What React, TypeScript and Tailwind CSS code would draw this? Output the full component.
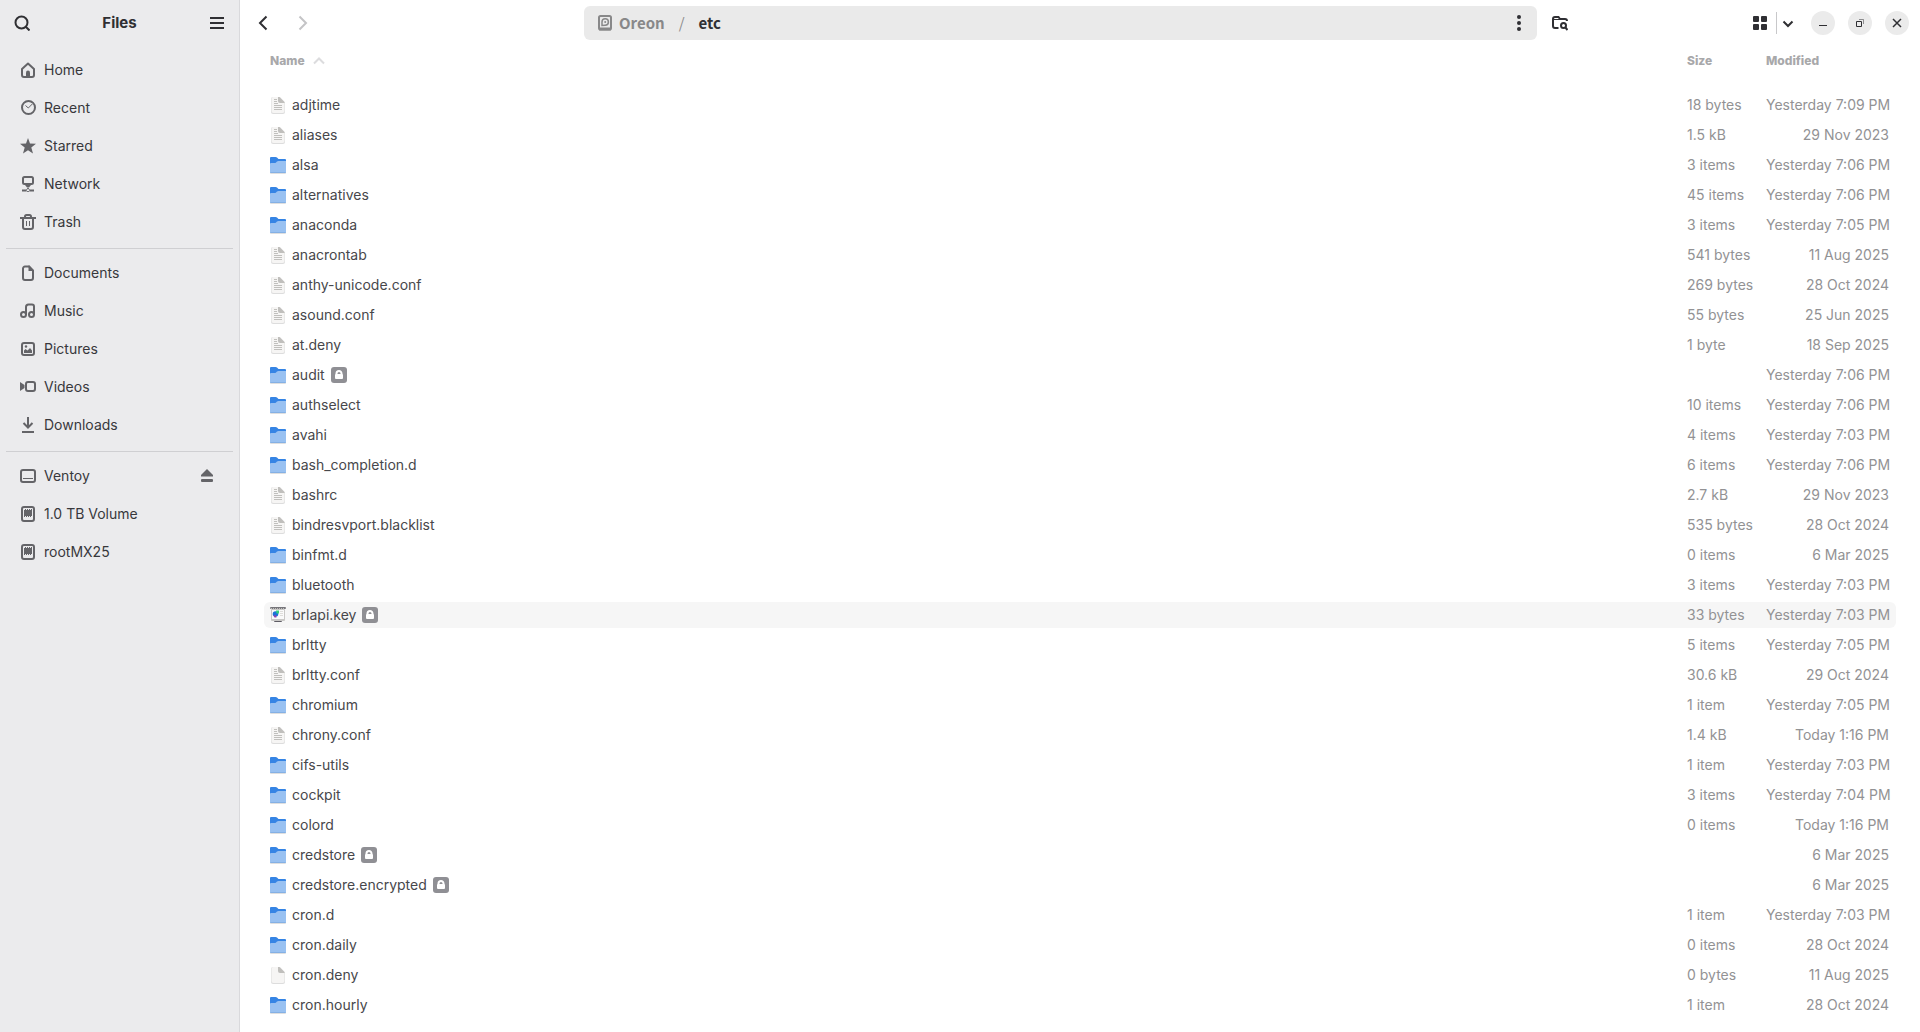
import type { ReactNode } from "react";
import clsx from "clsx";

type Kind = "text" | "folder" | "key" | "empty";

interface FileEntry {
  name: string;
  kind: Kind;
  size: string;
  modified: string;
  locked?: boolean;
  hovered?: boolean;
}

const files: FileEntry[] = [
  { name: "adjtime", kind: "text", size: "18 bytes", modified: "Yesterday 7:09 PM" },
  { name: "aliases", kind: "text", size: "1.5 kB", modified: "29 Nov 2023" },
  { name: "alsa", kind: "folder", size: "3 items", modified: "Yesterday 7:06 PM" },
  { name: "alternatives", kind: "folder", size: "45 items", modified: "Yesterday 7:06 PM" },
  { name: "anaconda", kind: "folder", size: "3 items", modified: "Yesterday 7:05 PM" },
  { name: "anacrontab", kind: "text", size: "541 bytes", modified: "11 Aug 2025" },
  { name: "anthy-unicode.conf", kind: "text", size: "269 bytes", modified: "28 Oct 2024" },
  { name: "asound.conf", kind: "text", size: "55 bytes", modified: "25 Jun 2025" },
  { name: "at.deny", kind: "text", size: "1 byte", modified: "18 Sep 2025" },
  { name: "audit", kind: "folder", size: "", modified: "Yesterday 7:06 PM", locked: true },
  { name: "authselect", kind: "folder", size: "10 items", modified: "Yesterday 7:06 PM" },
  { name: "avahi", kind: "folder", size: "4 items", modified: "Yesterday 7:03 PM" },
  { name: "bash_completion.d", kind: "folder", size: "6 items", modified: "Yesterday 7:06 PM" },
  { name: "bashrc", kind: "text", size: "2.7 kB", modified: "29 Nov 2023" },
  { name: "bindresvport.blacklist", kind: "text", size: "535 bytes", modified: "28 Oct 2024" },
  { name: "binfmt.d", kind: "folder", size: "0 items", modified: "6 Mar 2025" },
  { name: "bluetooth", kind: "folder", size: "3 items", modified: "Yesterday 7:03 PM" },
  { name: "brlapi.key", kind: "key", size: "33 bytes", modified: "Yesterday 7:03 PM", locked: true, hovered: true },
  { name: "brltty", kind: "folder", size: "5 items", modified: "Yesterday 7:05 PM" },
  { name: "brltty.conf", kind: "text", size: "30.6 kB", modified: "29 Oct 2024" },
  { name: "chromium", kind: "folder", size: "1 item", modified: "Yesterday 7:05 PM" },
  { name: "chrony.conf", kind: "text", size: "1.4 kB", modified: "Today 1:16 PM" },
  { name: "cifs-utils", kind: "folder", size: "1 item", modified: "Yesterday 7:03 PM" },
  { name: "cockpit", kind: "folder", size: "3 items", modified: "Yesterday 7:04 PM" },
  { name: "colord", kind: "folder", size: "0 items", modified: "Today 1:16 PM" },
  { name: "credstore", kind: "folder", size: "", modified: "6 Mar 2025", locked: true },
  { name: "credstore.encrypted", kind: "folder", size: "", modified: "6 Mar 2025", locked: true },
  { name: "cron.d", kind: "folder", size: "1 item", modified: "Yesterday 7:03 PM" },
  { name: "cron.daily", kind: "folder", size: "0 items", modified: "28 Oct 2024" },
  { name: "cron.deny", kind: "empty", size: "0 bytes", modified: "11 Aug 2025" },
  { name: "cron.hourly", kind: "folder", size: "1 item", modified: "28 Oct 2024" },
];

// 16px symbolic icon, strokes and fills follow the text colour
const Icon = ({ children }: { children: ReactNode }) => (
  <svg
    className="size-4 shrink-0"
    viewBox="0 0 16 16"
    fill="none"
    stroke="currentColor"
    strokeWidth="2"
    aria-hidden="true"
  >
    {children}
  </svg>
);

const VolumeIcon = () => (
  <Icon>
    <rect x="2" y="1" width="12" height="14" rx="2" />
    <path
      d="M4 4h1V3h1v1h1V3h1v1h1V3h1v1h1V3h1v7h-1v1h-1v-1h-1v1h-1v-1h-1v1h-1v-1h-1v1h-1v-1H4z"
      fill="currentColor"
      stroke="none"
    />
  </Icon>
);

const places = [
  {
    label: "Home",
    icon: (
      <Icon>
        <path d="M2 7 8 1.500 14 7v6a2 2 0 0 1-2 2H4a2 2 0 0 1-2-2z" strokeLinejoin="round" />
        <path d="M6 15v-4.500a2 2 0 0 1 4 0V15z" fill="currentColor" stroke="none" />
      </Icon>
    ),
  },
  {
    label: "Recent",
    icon: (
      <Icon>
        <circle cx="8.500" cy="7.500" r="6.500" />
        <path d="m5.500 5.500 2.800 2.500 4-4" strokeWidth="1" />
      </Icon>
    ),
  },
  {
    label: "Starred",
    icon: (
      <Icon>
        <path
          d="M8 0 10 5.500l6 .2-4.700 3.800 1.700 6L8 12.200 3 15.500l1.700-6L0 5.700l6-.2z"
          fill="currentColor"
          stroke="none"
        />
      </Icon>
    ),
  },
  {
    label: "Network",
    icon: (
      <Icon>
        <rect x="3" y="1" width="10" height="7" rx="1.500" />
        <path d="M5 9h6l-2 2.500H7z" fill="currentColor" stroke="none" />
        <path d="M2 14.500h4M10 14.500h4" />
        <path d="m8 12 2 2.500L8 16l-2-1.500z" strokeWidth="1" />
      </Icon>
    ),
  },
  {
    label: "Trash",
    icon: (
      <Icon>
        <path d="M5 4V2.500A1.500 1.500 0 0 1 6.500 1h3A1.500 1.500 0 0 1 11 2.500V4M0 4h16" />
        <path d="M3 5v8a2 2 0 0 0 2 2h6a2 2 0 0 0 2-2V5" />
        <path d="M6.500 7v5M9.500 7v5" strokeWidth="1" />
      </Icon>
    ),
  },
];

const userFolders = [
  {
    label: "Documents",
    icon: (
      <Icon>
        <path d="M9 1.500H5a2 2 0 0 0-2 2V13a2 2 0 0 0 2 2h6a2 2 0 0 0 2-2V5.500z" />
        <path d="M8.500.5V6H14L9.500.5z" fill="currentColor" stroke="none" />
      </Icon>
    ),
  },
  {
    label: "Music",
    icon: (
      <Icon>
        <circle cx="3.500" cy="11.500" r="2.500" />
        <circle cx="11.500" cy="11.500" r="2.500" />
        <path d="M6 12V4a2.500 2.500 0 0 1 2.500-2.500H12a2 2 0 0 1 2 2V12" />
      </Icon>
    ),
  },
  {
    label: "Pictures",
    icon: (
      <Icon>
        <rect x="2" y="2" width="12" height="12" rx="2" />
        <path d="M4 12V9.500L5.500 8l2 1.500L10 7l2 2.500V12z" fill="currentColor" stroke="none" />
        <circle cx="6" cy="5.500" r="1.200" fill="currentColor" stroke="none" />
      </Icon>
    ),
  },
  {
    label: "Videos",
    icon: (
      <Icon>
        <rect x="6" y="3" width="9" height="9" rx="2" />
        <path d="M0 3v9l4.500-3v-3z" fill="currentColor" stroke="none" />
      </Icon>
    ),
  },
  {
    label: "Downloads",
    icon: (
      <Icon>
        <path d="M8 0v10M3.500 6 8 10.500 12.500 6M2 15h12" />
      </Icon>
    ),
  },
];

const drives = [
  {
    label: "Ventoy",
    ejectable: true,
    icon: (
      <Icon>
        <rect x="1" y="2" width="14" height="12" rx="2" />
        <path d="M3 10.500h10" strokeWidth="1" />
      </Icon>
    ),
  },
  { label: "1.0 TB Volume", icon: <VolumeIcon /> },
  { label: "rootMX25", icon: <VolumeIcon /> },
];

const FileIcon = ({ kind }: { kind: Kind }) => {
  if (kind === "folder") {
    return (
      <svg className="size-[18px] shrink-0" viewBox="0 0 18 18" aria-hidden="true">
        <path d="M1 16.500h16V17q0 1-1 1H2q-1 0-1-1z" fill="#00000020" />
        <path d="M1 2q0-1 1-1h4.500Q7.500 1 8 1.500L9.500 3H16q1 0 1 1v10H1z" fill="#3584e4" />
        <path d="M1 16V8q0-1 1-1h3.500Q6.500 7 7 6.500L8 5.500Q8.500 5 9.500 5H17v11q0 1-1 1H2q-1 0-1-1z" fill="#99c1f1" />
        <path d="M1 16h16q0 1-1 1H2q-1 0-1-1z" fill="#84b0e4" />
      </svg>
    );
  }
  if (kind === "key") {
    return (
      <svg className="size-[18px] shrink-0" viewBox="0 0 18 18" aria-hidden="true">
        <path d="M6 14h6l1 2H5z" fill="#5e5c64" />
        <rect x="2" y="3" width="14" height="12" rx="1" fill="#c9c8c6" />
        <rect x="3" y="4" width="12" height="9" fill="#fafafa" />
        <rect x="1" y="1" width="16" height="2" rx="1" fill="#77767b" />
        <path d="M2 2.500h14" stroke="#c0bfbc" strokeDasharray="1 1" />
        <circle cx="6.500" cy="8" r="2.800" fill="#1c71d8" />
        <path d="M7 4.500h3v3H7.500z" fill="#33d17a" />
        <path d="M4.500 9.500 7 9l.5 2.500h-2z" fill="#9141ac" />
        <path d="M11 5.500h3M11 7.500h3M11 9.500h3" stroke="#deddda" />
      </svg>
    );
  }
  return (
    <svg className="size-[18px] shrink-0" viewBox="0 0 18 18" aria-hidden="true">
      <rect x="2" y="1" width="14" height="17" rx="2" fill="#00000022" />
      <path d="M4.500 1H10l5.500 5.500V15q0 2-2 2h-9q-2 0-2-2V3q0-2 2-2z" fill="#f6f5f4" />
      <path d="M10 0h6v6h-.5z" fill="#fff" />
      <path d="M9 1h1.500l5 5V7H11Q9 7 9 5z" fill="#c0bfbc" />
      {kind === "text" && (
        <path d="M5 3.500h3M5 5.500h3M5 7.500h4M5 9.500h8M5 11.500h8M5 13.500h8" stroke="#c0bfbc" />
      )}
    </svg>
  );
};

const LockBadge = () => (
  <svg className="size-4 shrink-0" viewBox="0 0 16 16" role="img" aria-label="Locked">
    <rect width="16" height="16" rx="3" fill="#8f8f94" />
    <path d="M5.500 7.500v-1a2.500 2.500 0 0 1 5 0v1" fill="none" stroke="#fff" strokeWidth="2" />
    <rect x="4" y="7" width="8" height="5" rx="1" fill="#fff" />
  </svg>
);

interface Place {
  label: string;
  icon: ReactNode;
  ejectable?: boolean;
}

const PlaceList = ({ items }: { items: Place[] }) => (
  <ul>
    {items.map((item) => (
      <li key={item.label} className="flex h-[38px] items-center">
        <a href="#" className="flex flex-1 items-center gap-2 pl-3.5 text-[#38383c]">
          <span className="text-[#646468]">{item.icon}</span>
          {item.label}
        </a>
        {item.ejectable && (
          <button type="button" aria-label="Eject" className="mr-[18px] text-[#646468]">
            <Icon>
              <path d="M8 1 2 7v1.500h12V7z" fill="currentColor" stroke="none" />
              <rect x="2" y="11" width="12" height="3" rx="1" fill="currentColor" stroke="none" />
            </Icon>
          </button>
        )}
      </li>
    ))}
  </ul>
);

const Sidebar = () => (
  <aside className="w-60 shrink-0 border-r border-[#d9d9dc] bg-[#ebebed]">
    <header className="flex h-[46px] items-center justify-between px-3.5 text-[#2f2f33]">
      <button type="button" aria-label="Search">
        <Icon>
          <circle cx="7.500" cy="7.500" r="6" />
          <path d="m11.500 11.500 4 4" />
        </Icon>
      </button>
      <h1 className="text-[15px] font-bold">Files</h1>
      <button type="button" aria-label="Main menu">
        <Icon>
          <path d="M1 3h14M1 8h14M1 13h14" />
        </Icon>
      </button>
    </header>
    <nav className="px-1.5 pt-[5px]">
      <PlaceList items={places} />
      <hr className="mt-[7px] mb-[5px] border-[#cfcfd2]" />
      <PlaceList items={userFolders} />
      <hr className="mt-[7px] mb-[5px] border-[#cfcfd2]" />
      <PlaceList items={drives} />
    </nav>
  </aside>
);

const WindowButton = ({ label, children }: { label: string; children: ReactNode }) => (
  <button
    type="button"
    aria-label={label}
    className="flex size-6 items-center justify-center rounded-full bg-[#ebebeb]"
  >
    {children}
  </button>
);

const HeaderBar = () => (
  <header className="flex h-[46px] items-center px-1.5 text-[#2f2f33]">
    <div className="flex w-[338px] shrink-0 gap-1.5">
      <button type="button" aria-label="Back" className="flex size-[34px] items-center justify-center">
        <Icon>
          <path d="M11.500 1.500 5 8l6.500 6.500" />
        </Icon>
      </button>
      <button
        type="button"
        aria-label="Forward"
        disabled
        className="flex size-[34px] items-center justify-center text-[#c4c4c6]"
      >
        <Icon>
          <path d="M4.500 1.500 11 8l-6.500 6.500" />
        </Icon>
      </button>
    </div>

    <div className="flex h-[34px] flex-1 items-center rounded-md bg-[#eaeaea] pl-[13px] pr-2.5 font-['Noto_Sans_CJK_JP',sans-serif] text-[15px] leading-5 font-bold">
      <a href="#" className="flex items-center gap-1.5 text-[#888889]">
        <Icon>
          <rect x="2" y="1" width="12" height="13.500" rx="1.500" />
          <path d="M2 14h12" strokeWidth="3" />
          <path d="M5 10.500V7a3.200 3.200 0 1 1 3.200 3.200z" strokeWidth="1.500" />
          <circle cx="8.200" cy="7" r="1" fill="currentColor" stroke="none" />
        </Icon>
        Oreon
      </a>
      <span className="mx-3.5 font-normal text-[#8c8c8d]">/</span>
      <span>etc</span>
      <button type="button" aria-label="Folder menu" className="ml-auto">
        <Icon>
          <g fill="currentColor" stroke="none">
            <circle cx="8" cy="2" r="2" />
            <circle cx="8" cy="8" r="2" />
            <circle cx="8" cy="14" r="2" />
          </g>
        </Icon>
      </button>
    </div>

    <div className="flex w-[377px] shrink-0 items-center pl-1.5">
      <button
        type="button"
        aria-label="Search current folder"
        className="flex size-[34px] items-center justify-center"
      >
        <Icon>
          <path d="M6.500 13H3a2 2 0 0 1-2-2V4a2 2 0 0 1 2-2h3.500l1.500 2h5a2 2 0 0 1 2 2" />
          <path d="M1.500 4.500H9" strokeWidth="1" />
          <circle cx="11.500" cy="10.500" r="2.500" />
          <path d="m13 12 2.500 3" />
        </Icon>
      </button>
      <div className="ml-auto flex items-center">
        <button type="button" aria-label="Grid view" className="px-2">
          <Icon>
            <g fill="currentColor" stroke="none">
              <rect x="1" y="1" width="6" height="6" rx="1" />
              <rect x="9" y="1" width="6" height="6" rx="1" />
              <rect x="1" y="9" width="6" height="6" rx="1" />
              <rect x="9" y="9" width="6" height="6" rx="1" />
            </g>
          </Icon>
        </button>
        <div className="h-[22px] w-px bg-[#c8c8ca]" />
        <button type="button" aria-label="View options" className="pr-[15px] pl-[3px]">
          <Icon>
            <path d="M3.500 6.500 8 11l4.500-4.500" />
          </Icon>
        </button>
        <div className="flex gap-[13px] pr-[5px]">
          <WindowButton label="Minimize">
            <Icon>
              <path d="M4 10.500h8" strokeWidth="1" />
            </Icon>
          </WindowButton>
          <WindowButton label="Restore">
            <Icon>
              <path d="M4.500 6.500h5v5h-5z" strokeWidth="1" />
              <path d="M7 4.500h4.500V9" strokeWidth="1" opacity=".5" />
            </Icon>
          </WindowButton>
          <WindowButton label="Close">
            <Icon>
              <path d="m4 4 8 8M12 4l-8 8" strokeWidth="1.500" />
            </Icon>
          </WindowButton>
        </div>
      </div>
    </div>
  </header>
);

const FileTable = () => (
  <div className="px-6">
    <table className="w-full table-fixed border-separate border-spacing-x-0 border-spacing-y-1">
      <thead>
        <tr className="h-[38px] text-left align-top text-xs leading-[22px] text-[#a8a8aa]">
          <th className="pl-1.5 font-extrabold">
            <button type="button" className="flex items-center gap-2">
              Name
              <svg className="size-3" viewBox="0 0 12 12" fill="none" stroke="#dcdcde" strokeWidth="2" aria-hidden="true">
                <path d="m1 8.500 5-5 5 5" />
              </svg>
            </button>
          </th>
          <th className="w-[79px] font-extrabold">Size</th>
          <th className="w-[130px] font-extrabold">Modified</th>
        </tr>
      </thead>
      <tbody>
        {files.map((file) => (
          <tr
            key={file.name}
            className={clsx("h-[26px] leading-5 whitespace-nowrap text-[#929294]", file.hovered && "bg-[#f6f6f6]")}
          >
            <td className="rounded-l-md pl-[5px]">
              <div className="flex items-center text-[#47474b]">
                <FileIcon kind={file.kind} />
                <span className="pl-[5px] pr-1.5">{file.name}</span>
                {file.locked && <LockBadge />}
              </div>
            </td>
            <td>{file.size}</td>
            <td className="rounded-r-md pr-[7px] text-right">{file.modified}</td>
          </tr>
        ))}
      </tbody>
    </table>
  </div>
);

const App = () => (
  <div className="flex min-h-screen bg-white font-['Inter',sans-serif] text-sm">
    <Sidebar />
    <main className="min-w-0 flex-1">
      <HeaderBar />
      <FileTable />
    </main>
  </div>
);

export default App;
